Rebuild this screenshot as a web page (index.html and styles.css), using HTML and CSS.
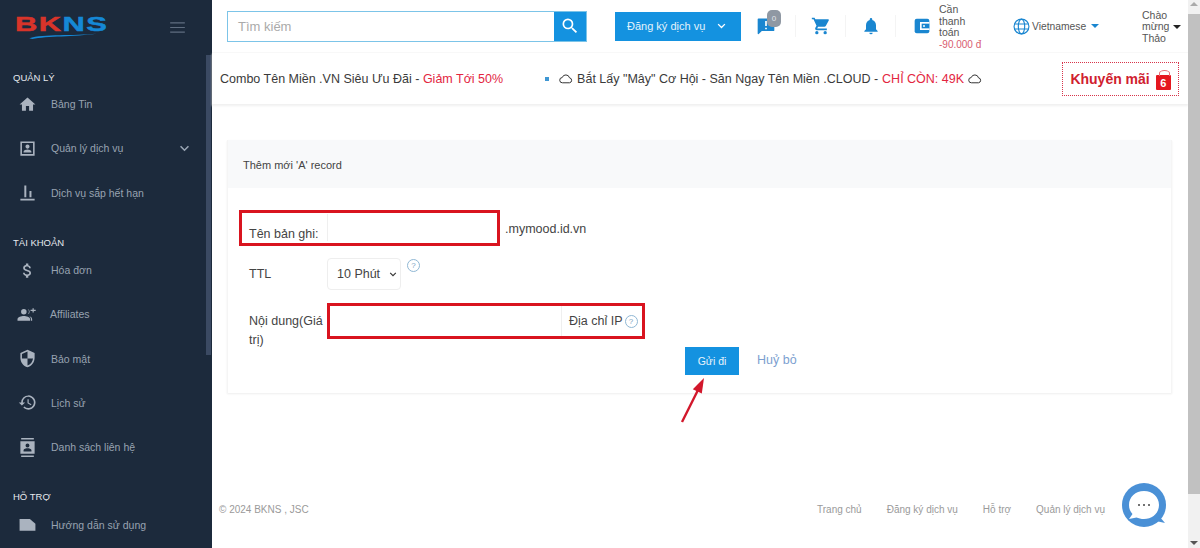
FILE: index.html
```html
<!DOCTYPE html>
<html lang="vi">
<head>
<meta charset="utf-8">
<title>BKNS</title>
<link rel="stylesheet" href="styles.css">
</head>
<body>
<div class="app">
  <aside class="sidebar">
    <div class="brand">
      <div class="logo">
        <div class="logo-text"><span class="logo-red">BK</span><span class="logo-blue">NS</span></div>
        <svg class="logo-swoosh" viewBox="0 0 92 8"><path d="M1 7C20 1 60 4 91 1 62 5 24 4 5 8Z" fill="#1588d6"/></svg>
      </div>
      <svg class="burger" viewBox="0 0 16 12"><path d="M0 1h16M0 6h16M0 11h16" stroke="#5f6d80" stroke-width="1.2"/></svg>
    </div>
    <div class="side-thumb"></div>
    <div class="section first">QUẢN LÝ</div>
    <div class="item"><svg class="ico" viewBox="0 0 24 24"><path d="M10 20v-6h4v6h5v-8h3L12 3 2 12h3v8z"/></svg><span>Bảng Tin</span></div>
    <div class="item"><svg class="ico" viewBox="0 0 24 24"><path fill-rule="evenodd" d="M3 3h18v18H3zM5 5v14h14V5zM12 7a2.600 2.600 0 1 1 0 5.200A2.600 2.600 0 0 1 12 7zM7 17v-1c0-1.700 3.300-2.600 5-2.600s5 .9 5 2.600v1z"/></svg><span>Quản lý dịch vụ</span><svg class="chev" viewBox="0 0 12 8"><path d="M1.500 1.500 6 6l4.500-4.500" fill="none" stroke="#9aa5b4" stroke-width="1.800"/></svg></div>
    <div class="item"><svg class="ico" viewBox="0 0 24 24"><path d="M3 20h18v2H3zM8 3h2.500v15H8zM14.500 10H17v8h-2.500z"/></svg><span>Dịch vụ sắp hết hạn</span></div>
    <div class="section">TÀI KHOẢN</div>
    <div class="item"><svg class="ico" viewBox="0 0 24 24"><path d="M11.800 10.900c-2.300-.6-3-1.200-3-2.100 0-1.100 1-1.800 2.700-1.800 1.800 0 2.400.8 2.500 2.100h2.200c-.1-1.700-1.100-3.200-3.200-3.700V3h-3v2.200C8.100 5.600 6.500 6.900 6.500 8.800c0 2.300 1.900 3.400 4.700 4.100 2.500.6 3 1.500 3 2.400 0 .7-.5 1.700-2.700 1.700-2.100 0-2.900-.9-3-2.100H6.300c.1 2.200 1.800 3.500 3.700 3.900V21h3v-2.100c1.900-.4 3.500-1.500 3.500-3.600 0-2.800-2.400-3.800-4.700-4.400z"/></svg><span>Hóa đơn</span></div>
    <div class="item"><svg class="ico wide" viewBox="0 0 24 24"><path d="M8 5a3.500 3.500 0 1 1 0 7 3.500 3.500 0 0 1 0-7zM0 20v-2c0-2.500 5-4 8-4s8 1.500 8 4v2zM13 5.200a3.500 3.500 0 0 1 0 6.600 5 5 0 0 0 0-6.600zM15 14.200c2 .6 3.500 1.800 3.500 3.800v2H17v-2c0-1.500-.8-2.800-2-3.800zM19 6V4h1.500v2h2.500v1.500h-2.500v2H19v-2h-2.500V6z"/></svg><span>Affiliates</span></div>
    <div class="item"><svg class="ico" viewBox="0 0 24 24"><path fill-rule="evenodd" d="M12 1 3 5v6c0 5.500 3.800 10.700 9 12 5.200-1.300 9-6.500 9-12V5zm0 2.200V12H5V6.300zM12 12h7c-.5 4.100-3.300 7.800-7 8.900z"/></svg><span>Bảo mật</span></div>
    <div class="item"><svg class="ico" viewBox="0 0 24 24"><path d="M13 3a9 9 0 0 0-9 9H1l3.900 3.900L9 12H6a7 7 0 1 1 2.100 4.900l-1.400 1.400A9 9 0 1 0 13 3zm-1 5v5l4.300 2.500.7-1.200-3.500-2.100V8z"/></svg><span>Lịch sử</span></div>
    <div class="item"><svg class="ico" viewBox="0 0 24 24"><path fill-rule="evenodd" d="M4 0h16v2H4zM4 22h16v2H4zM3 4h18v16H3zM12 7a2.500 2.500 0 1 0 0 5 2.500 2.500 0 0 0 0-5zM7 17h10v-1.500c0-1.700-3.300-2.500-5-2.500s-5 .8-5 2.500z"/></svg><span>Danh sách liên hệ</span></div>
    <div class="section last">HỖ TRỢ</div>
    <div class="item"><svg class="ico" viewBox="0 0 24 24"><path d="M2 5h13l7 6v9H2z"/></svg><span>Hướng dẫn sử dụng</span></div>
  </aside>

  <div class="main">
    <header class="topbar">
      <div class="search"><span class="search-text">Tìm kiếm</span><div class="search-btn"><svg viewBox="0 0 24 24" width="20" height="20"><path d="M15.500 14h-.79l-.28-.27A6.470 6.470 0 0 0 16 9.500 6.500 6.500 0 1 0 9.500 16c1.610 0 3.090-.59 4.230-1.570l.27.28v.79l5 4.990L20.490 19l-4.990-5zm-6 0C7.010 14 5 11.990 5 9.500S7.010 5 9.500 5 14 7.010 14 9.500 11.990 14 9.500 14z" fill="#fff"/></svg></div></div>
      <div class="register"><span>Đăng ký dịch vụ</span><svg viewBox="0 0 12 8" width="9" height="6"><path d="M1.500 1.500 6 6l4.500-4.500" fill="none" stroke="#fff" stroke-width="1.800"/></svg></div>
      <div class="tool msg"><svg viewBox="0 0 24 24" width="20" height="20"><path fill-rule="evenodd" d="M3 3h18a1 1 0 0 1 1 1v13a1 1 0 0 1-1 1H7l-4 4a1 1 0 0 1-1-1V4a1 1 0 0 1 1-1zM11 6v6h2V6zm0 8v2h2v-2z" fill="#1a86d0"/></svg><span class="count">0</span></div>
      <div class="tool"><svg viewBox="0 0 24 24" width="20" height="20"><path d="M7 18a2 2 0 1 0 0 4 2 2 0 0 0 0-4zM1 2v2h2l3.600 7.600L5.200 14c-.7 1.300.2 3 1.800 3h12v-2H7.400l1.100-2h7.500c.7 0 1.400-.4 1.700-1l3.600-6.500c.4-.7-.1-1.500-.9-1.500H5.200L4.300 2z" fill="#1a86d0"/><circle cx="17" cy="20" r="2" fill="#1a86d0"/></svg></div>
      <div class="tool"><svg viewBox="0 0 24 24" width="20" height="20"><path d="M12 22a2 2 0 0 0 2-2h-4a2 2 0 0 0 2 2zm6-6v-5c0-3.100-1.600-5.600-4.500-6.300V4a1.500 1.500 0 0 0-3 0v.7C7.600 5.400 6 7.900 6 11v5l-2 2v1h16v-1z" fill="#1a86d0"/></svg></div>
      <div class="pay">
        <svg viewBox="0 0 24 24" width="16" height="16"><rect x="1" y="1" width="22" height="22" rx="3" fill="#1a86d0"/><rect x="9" y="6" width="14" height="12" fill="#fff"/><rect x="11.500" y="8.500" width="11.500" height="7" fill="#1a86d0"/><circle cx="15" cy="12" r="1.500" fill="#fff"/></svg>
        <div class="pay-text">Cần thanh toán<div class="pay-amount">-90.000 đ</div></div>
      </div>
      <div class="lang">
        <svg viewBox="0 0 24 24" width="17" height="17" fill="none" stroke="#1a86d0" stroke-width="1.600"><circle cx="12" cy="12" r="10.500"/><ellipse cx="12" cy="12" rx="4.500" ry="10.500"/><path d="M2 8.500h20M2 15.500h20"/></svg>
        <span>Vietnamese</span><i class="caret blue"></i>
      </div>
      <div class="user"><span class="user-name">Chào mừng Thảo</span><i class="caret"></i></div>
    </header>

    <div class="ticker">
      <div class="ticker-a">Combo Tên Miền .VN Siêu Ưu Đãi - <em>Giảm Tới 50%</em></div>
      <i class="dot"></i>
      <div class="ticker-b">
        <svg class="cloud" viewBox="0 0 24 16"><path d="M6 14.500a4.500 4.500 0 0 1-.5-9A6.500 6.500 0 0 1 18 6a4.300 4.300 0 0 1 0 8.500z" fill="none" stroke="#333" stroke-width="1.700"/></svg>
        Bắt Lấy "Mây" Cơ Hội - Săn Ngay Tên Miền .CLOUD - <em>CHỈ CÒN: 49K</em>
        <svg class="cloud" viewBox="0 0 24 16"><path d="M6 14.500a4.500 4.500 0 0 1-.5-9A6.500 6.500 0 0 1 18 6a4.300 4.300 0 0 1 0 8.500z" fill="none" stroke="#333" stroke-width="1.700"/></svg>
      </div>
      <div class="promo">Khuyến mãi
        <span class="gift">6</span>
      </div>
    </div>

    <section class="card">
      <div class="card-head">Thêm mới 'A' record</div>
      <div class="card-body">
        <div class="row-name">
          <div class="redbox name-box"><label>Tên bản ghi:</label><div class="blank"></div></div>
          <span class="suffix">.mymood.id.vn</span>
        </div>
        <div class="row-ttl">
          <label class="flabel">TTL</label>
          <div class="select"><span>10 Phút</span><svg viewBox="0 0 12 8" width="8" height="5"><path d="M1.500 1.500 6 6l4.500-4.500" fill="none" stroke="#333" stroke-width="1.800"/></svg></div>
          <span class="help">?</span>
        </div>
        <div class="row-value">
          <label class="flabel">Nội dung(Giá trị)</label>
          <div class="redbox value-box"><div class="blank-wide"></div><div class="addon">Địa chỉ IP<span class="help small">?</span></div></div>
        </div>
        <div class="actions"><span class="submit">Gửi đi</span><span class="cancel">Huỷ bỏ</span></div>
      </div>
    </section>

    <footer class="footer">
      <span class="copy">© 2024 BKNS , JSC</span>
      <nav class="links"><span>Trang chủ</span><span>Đăng ký dịch vụ</span><span>Hỗ trợ</span><span>Quản lý dịch vụ</span></nav>
    </footer>

    <svg class="arrow" viewBox="0 0 28 48"><path d="M2 46 19 12" stroke="#d2172b" stroke-width="2.400" fill="none"/><path d="M24 2 21.800 17.600 12.800 13.200Z" fill="#d2172b"/></svg>
    <div class="chat"><svg viewBox="0 0 48 48"><circle cx="23" cy="23" r="22" fill="#4a90d6"/><path d="M23 9c8.500 0 15 6 15 14s-6.500 14-15 14c-3 0-5.500-.6-7.500-1.500L8 37l3.500-5C9 29 8 26.500 8 23 8 15 14.500 9 23 9z" fill="#fff"/><path d="M38 34l6 7-9-2z" fill="#4a90d6"/><circle cx="18" cy="23" r="1" fill="#444"/><circle cx="23" cy="23" r="1" fill="#444"/><circle cx="28" cy="23" r="1" fill="#444"/></svg></div>
  </div>

  <div class="scrollbar"><i class="up"></i><div class="thumb"></div><i class="down"></i></div>
</div>
</body>
</html>
```
FILE: styles.css
```css
* { box-sizing: border-box; }
html, body { margin: 0; height: 100%; overflow: hidden; }
body { font-family: "Liberation Sans", Arial, sans-serif; color: #333; background: #fff; }
em { font-style: normal; color: #e3263f; }
label { display: block; }

.app { display: flex; width: 1200px; height: 548px; }

/* sidebar */
.sidebar { position: relative; flex: 0 0 212px; background: #1c2a3c; color: #98a3b1; font-size: 10.500px; overflow: hidden; }
.brand { display: flex; align-items: flex-start; justify-content: space-between; height: 68px; padding: 14px 27px 0 15px; }
.logo { width: 92px; }
.logo-text { font-size: 21px; line-height: 19px; font-weight: 700; letter-spacing: 1px; -webkit-text-stroke: .5px; transform: scaleX(1.470); transform-origin: left; }
.logo-red { color: #d8342a; }
.logo-blue { color: #1588d6; }
.logo-swoosh { display: block; width: 90px; height: 6px; margin: 0 0 0 3px; }
.burger { width: 15px; height: 11px; margin-top: 8px; }
.side-thumb { position: absolute; left: 206px; top: 55px; width: 5px; height: 300px; background: #3b4a63; }
.section { color: #e6e9ee; font-size: 9.500px; line-height: 14px; padding-left: 13px; margin-top: 21px; }
.section.first { margin-top: 3px; }
.section + .item { margin-top: -2px; }
.section.first + .item { margin-top: -3px; }
.item { display: flex; align-items: center; height: 44.300px; padding-left: 18px; position: relative; }
.item span { margin-left: 14px; }
.ico { width: 19px; height: 19px; fill: #aab3bf; flex: none; }
.ico.wide { width: 22px; margin-left: -2px; margin-right: -2px; }
.chev { position: absolute; left: 179px; top: 19px; width: 11px; height: 7px; }

/* main column */
.main { position: relative; flex: 1; min-width: 0; display: flex; flex-direction: column; }
.topbar { display: flex; align-items: center; height: 52px; padding-left: 15px; }
.search { display: flex; width: 360px; height: 31px; border: 1px solid #7cc4e8; }
.search-text { flex: 1; padding-left: 10px; font-size: 13px; line-height: 29px; color: #aaa; }
.search-btn { width: 32px; background: #1492e0; display: flex; align-items: center; justify-content: center; }
.register { display: flex; align-items: center; justify-content: space-between; width: 126px; height: 29px; margin-left: 28px; padding: 0 15px 0 12px; background: #1492e0; color: #e4f2fb; font-size: 11px; }
.tool { position: relative; width: 50px; height: 22px; display: flex; align-items: center; justify-content: center; border-right: 1px solid #f4f4f4; }
.tool.msg { width: 55px; padding-left: 15px; justify-content: flex-start; }
.count { position: absolute; left: 26px; top: -5px; width: 14px; height: 17px; border-radius: 5px; background: #8f98a3; color: #e4e6ea; font-size: 8px; line-height: 17px; text-align: center; }
.pay { display: flex; align-items: center; width: 84px; margin-left: 18px; }
.pay-text { width: 42px; margin: 2px 0 0 9px; font-size: 10.500px; line-height: 11.500px; color: #555; }
.pay-amount { color: #d95b70; font-size: 10px; white-space: nowrap; }
.lang { display: flex; align-items: center; width: 144px; font-size: 10.300px; color: #555; padding-left: 15px; }
.lang span { margin-left: 2px; }
.caret { display: inline-block; width: 0; height: 0; border: 4px solid transparent; border-top: 4.500px solid #222; border-bottom: 0; }
.caret.blue { border-top-color: #1a86d0; margin-left: 5px; }
.user { display: flex; align-items: center; margin-top: 2px; font-size: 10.500px; line-height: 11.500px; color: #555; }
.user-name { width: 31px; }

.ticker { display: flex; align-items: center; height: 52px; padding-left: 8px; border-top: 1px solid #f8f8f8; box-shadow: 0 2px 2px #f0f0f0; font-size: 12.500px; color: #3a3a3a; white-space: nowrap; }
.dot { width: 4px; height: 4px; margin: 0 10px 0 42px; background: #3f97d3; }
.ticker-b { display: flex; align-items: center; gap: 4px; }
.cloud { width: 14px; height: 10px; flex: none; }
.promo { display: flex; align-items: center; justify-content: center; gap: 6px; width: 117px; height: 34px; margin: 1px 0 0 80px; border: 1px dotted #d8344a; color: #d0202e; font-size: 14px; font-weight: 700; }
.gift { position: relative; width: 15px; height: 15px; margin-top: 6px; background: #e5171f; color: #fff; font-size: 11px; font-weight: 700; line-height: 16px; text-align: center; border-radius: 1px; }
.gift::before { content: ""; position: absolute; left: 3px; top: -5px; width: 9px; height: 5px; border: 1px solid #e87078; border-bottom: 0; border-radius: 50% 50% 0 0; }

.card { margin: 36px 16px 0 15px; height: 253px; box-shadow: 0 1px 2px #eee; border-left: 1px solid #f5f5f5; border-right: 1px solid #f5f5f5; }
.card-head { height: 48px; padding-left: 15px; background: #f8f9fa; font-size: 11px; line-height: 50px; color: #444; }
.card-body { position: relative; padding: 22px 0 0 11px; font-size: 12.500px; color: #444; }
.redbox { border: 3px solid #d9141f; display: flex; }
.row-name { display: flex; align-items: center; height: 36px; }
.name-box { width: 261px; height: 36px; align-items: flex-end; padding: 0 0 2px 7px; }
.name-box label { width: 78px; }
.blank { flex: 1; height: 27px; border-left: 1px solid #efefef; }
.suffix { margin: 2px 0 0 5px; color: #444; }
.row-ttl { display: flex; align-items: flex-start; margin-top: 12px; padding-left: 10px; }
.flabel { width: 78px; line-height: 18px; }
.row-ttl .flabel { margin-top: 7px; }
.select { display: flex; align-items: center; justify-content: space-between; width: 74px; height: 32px; padding: 0 3px 0 9px; border: 1px solid #eee; border-radius: 4px; }
.help { display: inline-block; width: 13px; height: 13px; margin: 1px 0 0 6px; border: 1px solid #8fb7d4; border-radius: 50%; color: #7aa3c2; font-size: 8px; line-height: 11px; text-align: center; }
.help.small { margin: 0 0 0 2px; }
.row-value { display: flex; height: 36px; margin-top: 13px; padding-left: 10px; }
.row-value .flabel { width: 78px; padding-top: 9px; line-height: 19px; }
.value-box { width: 318px; height: 36px; }
.blank-wide { width: 232px; border-right: 1px solid #efefef; }
.addon { display: flex; align-items: center; padding-left: 7px; white-space: nowrap; }
.actions { display: flex; align-items: center; margin-top: 8px; padding-left: 446px; }
.submit { display: block; width: 54px; height: 28px; background: #1492e0; color: #e8f4fc; font-size: 10.500px; line-height: 28px; text-align: center; }
.cancel { margin: 0 0 3px 18px; color: #7c9fd0; font-size: 12.500px; }

.footer { display: flex; justify-content: space-between; margin-top: auto; height: 44px; padding: 0 83px 0 7px; font-size: 10px; color: #9a9a9a; }
.links { display: flex; gap: 25px; }

.arrow { position: absolute; left: 468px; top: 376px; width: 28px; height: 48px; }
.chat { position: absolute; left: 909px; top: 482px; width: 48px; height: 48px; }
.chat svg { display: block; width: 48px; height: 48px; }

.scrollbar { position: relative; flex: 0 0 12px; background: #f1f1f1; }
.thumb { position: absolute; left: 0; right: 0; top: 14px; height: 480px; background: #c1c1c1; }
.up, .down { position: absolute; left: 2px; width: 0; height: 0; border: 4px solid transparent; }
.up { top: 2px; border-bottom: 4px solid #aaa; border-top: 0; }
.down { bottom: 3px; border-top: 4px solid #555; border-bottom: 0; }
```
